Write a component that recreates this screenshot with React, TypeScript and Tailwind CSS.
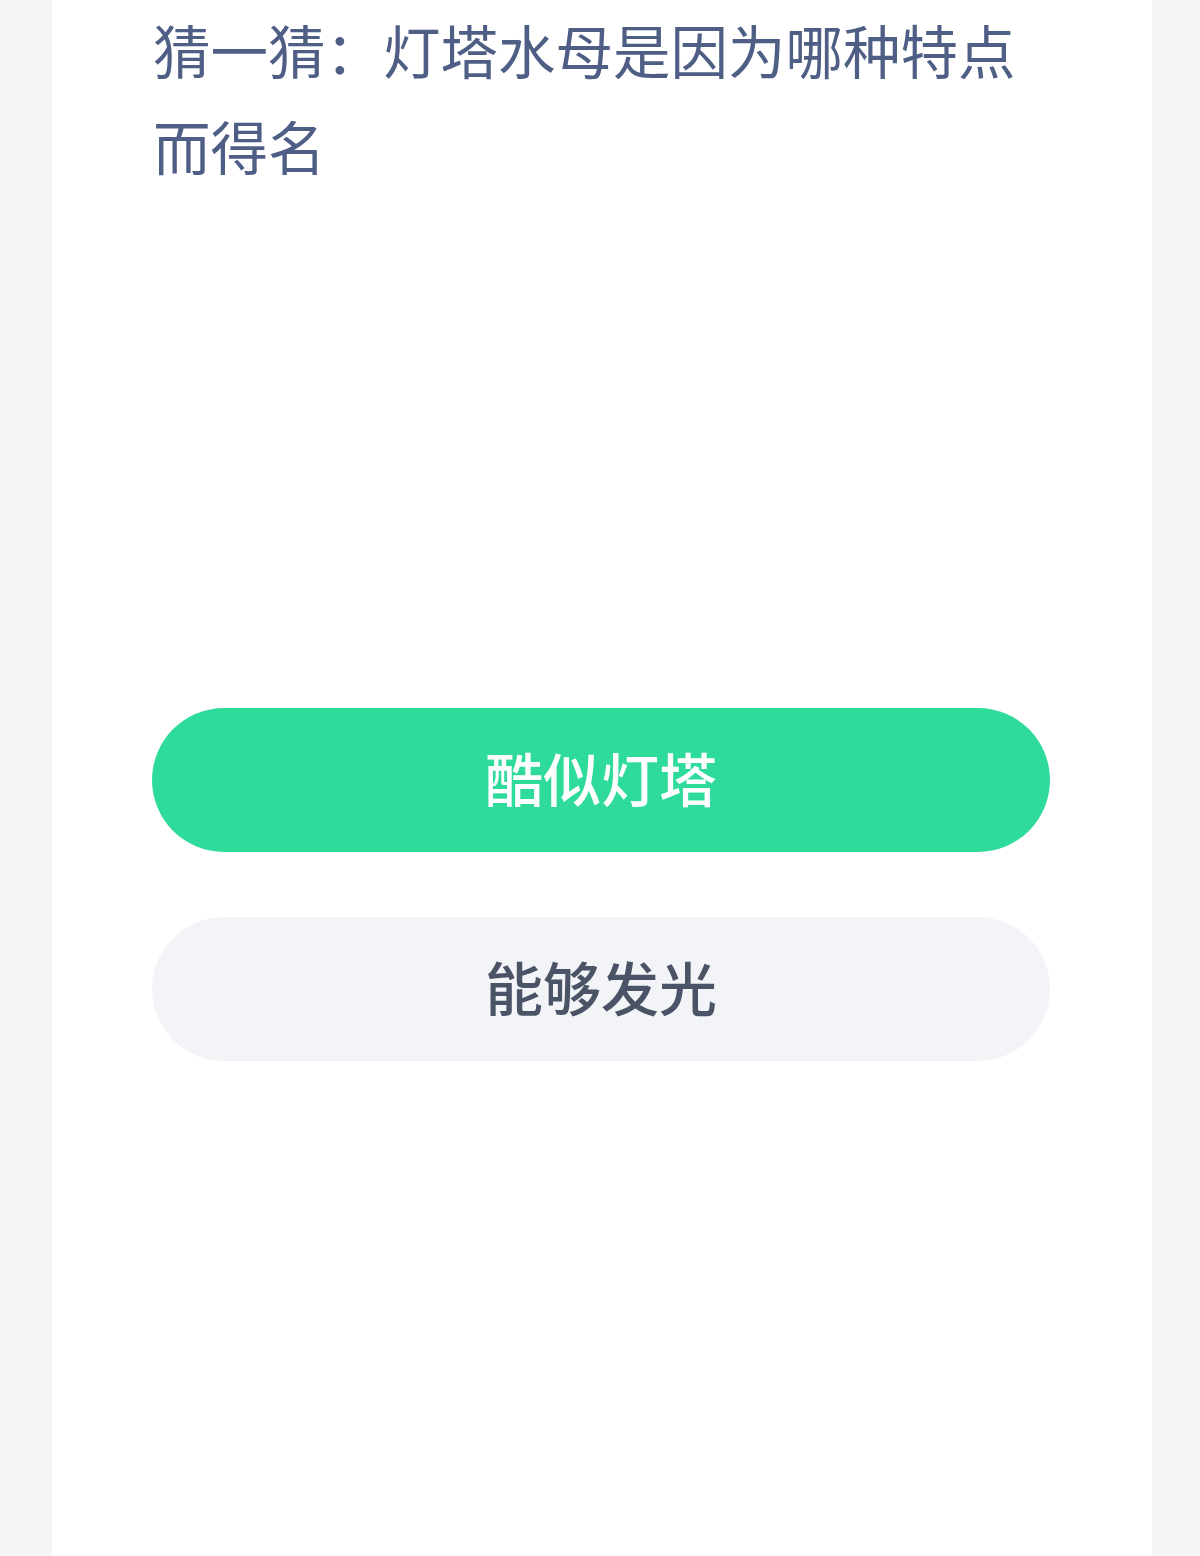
import React from "react";

const options = [
  { label: "酷似灯塔", active: true },
  { label: "能够发光", active: false },
];

export default function App() {
  return (
    <div className="min-h-[1556px] bg-[#f5f5f6] pl-[52px] font-['Noto_Sans_CJK_SC','Noto_Sans',sans-serif]">
      <div className="w-[1100px] min-h-[1556px] bg-white px-[100px] pt-[1px]">
        {/* Question */}
        <h1 className="pl-[1px] text-[57.5px] leading-[96px] font-normal text-[#4f5e85]">
          猜一猜：灯塔水母是因为哪种特点而得名
        </h1>

        {/* Answer options */}
        <div className="mt-[515px] flex flex-col gap-[65px]">
          {options.map((o) => (
            <button
              key={o.label}
              className={
                o.active
                  ? "h-[144px] w-[898px] rounded-full bg-[#2fdb9a] pb-[6px] text-white text-[58px] font-medium"
                  : "h-[144px] w-[898px] rounded-full bg-[#f3f4f7] pb-[6px] text-[#4a5466] text-[58px] font-medium"
              }
            >
              {o.label}
            </button>
          ))}
        </div>
      </div>
    </div>
  );
}
